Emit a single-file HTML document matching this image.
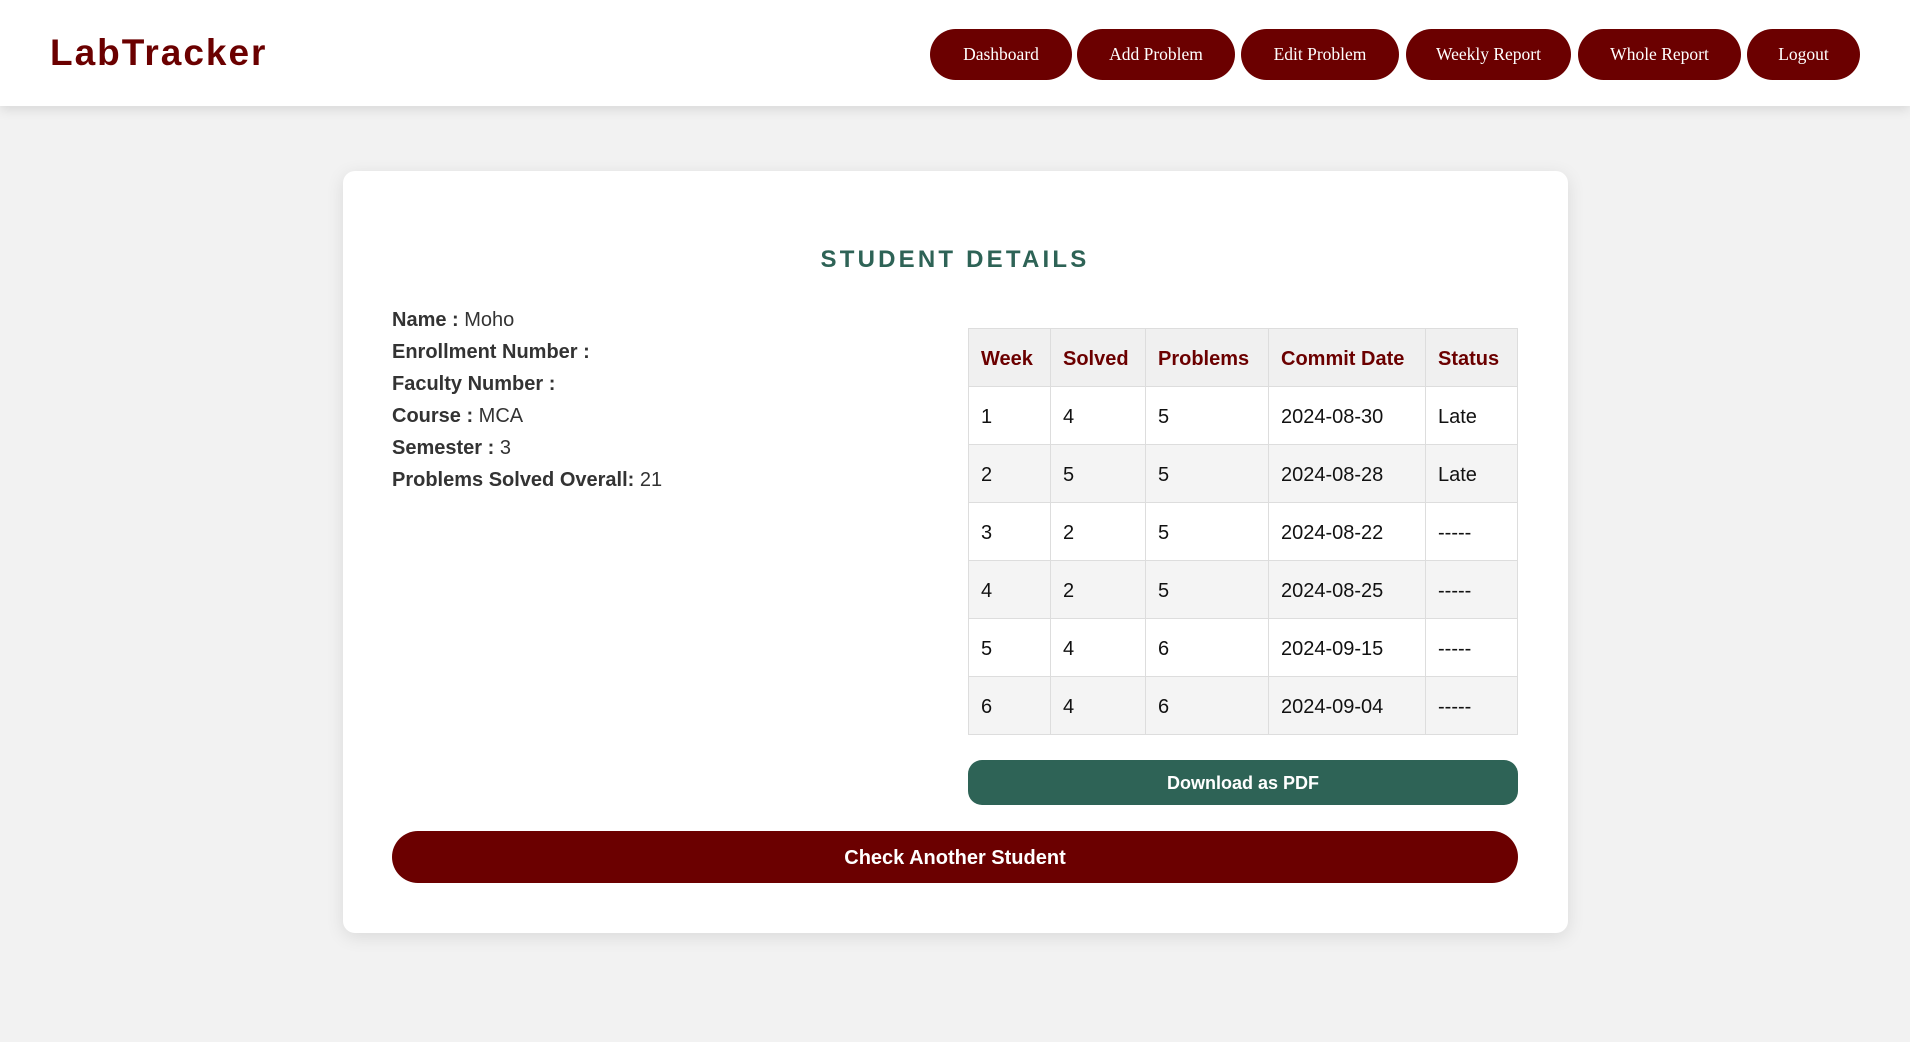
<!DOCTYPE html>
<html><head><meta charset="utf-8"><style>
*{box-sizing:border-box;margin:0;padding:0}
body{width:1910px;height:1042px;background:#f2f2f2;font-family:"Liberation Sans",Arial,sans-serif;position:relative;overflow:hidden}
.hdr{position:absolute;left:0;top:0;width:1910px;height:106px;background:#fff;box-shadow:0 3px 12px rgba(0,0,0,.12)}
.logo{position:absolute;left:50px;top:32px;font-size:37px;font-weight:bold;color:#6b0000;letter-spacing:2px}
.nb{position:absolute;top:29px;height:51px;border-radius:26px;background:#6b0000;color:#fff;font-family:"Liberation Serif",serif;font-size:17.5px;display:flex;align-items:center;justify-content:center}
.card{position:absolute;left:343px;top:171px;width:1225px;height:762px;background:#fff;border-radius:12px;box-shadow:0 4px 18px rgba(0,0,0,.1)}
.title{position:absolute;left:0;width:1910px;top:246px;text-align:center;font-size:24px;font-weight:bold;color:#2e6356;letter-spacing:3.2px}
.det{position:absolute;left:392px;font-size:20px;color:#333}
.det b{color:#333}
table{position:absolute;left:968px;top:328px;width:550px;border-collapse:collapse;font-size:20px}
td,th{border:1px solid #ddd;padding:3px 12px 0;text-align:left;height:58px;color:#111;font-weight:normal}
th{color:#6b0000;font-weight:bold;background:#f0f0f0}
tr:nth-child(odd) td{background:#f4f4f4}
.dl{position:absolute;left:968px;top:760px;width:550px;height:45px;border-radius:14px;background:#2e6356;color:#fff;font-weight:bold;font-size:18px;display:flex;align-items:center;justify-content:center;padding-top:2px}
.ck{position:absolute;left:392px;top:831px;width:1126px;height:52px;border-radius:26px;background:#6b0000;color:#fff;font-weight:bold;font-size:20px;display:flex;align-items:center;justify-content:center;padding-top:2px}
</style></head><body>
<div class="hdr"><div class="logo">LabTracker</div>
<div class="nb" style="left:930px;width:142px">Dashboard</div>
<div class="nb" style="left:1077px;width:158px">Add Problem</div>
<div class="nb" style="left:1241px;width:158px">Edit Problem</div>
<div class="nb" style="left:1406px;width:165px">Weekly Report</div>
<div class="nb" style="left:1578px;width:163px">Whole Report</div>
<div class="nb" style="left:1747px;width:113px">Logout</div>
</div>
<div class="card"></div>
<div class="title">STUDENT DETAILS</div>
<div class="det" style="top:309px"><b>Name :</b> Moho</div>
<div class="det" style="top:341px"><b>Enrollment Number :</b></div>
<div class="det" style="top:373px"><b>Faculty Number :</b></div>
<div class="det" style="top:405px"><b>Course :</b> MCA</div>
<div class="det" style="top:437px"><b>Semester :</b> 3</div>
<div class="det" style="top:469px"><b>Problems Solved Overall:</b> 21</div>
<table>
<tr><th style="width:82px">Week</th><th style="width:95px">Solved</th><th style="width:123px">Problems</th><th style="width:157px">Commit Date</th><th>Status</th></tr>
<tr><td>1</td><td>4</td><td>5</td><td>2024-08-30</td><td>Late</td></tr>
<tr><td>2</td><td>5</td><td>5</td><td>2024-08-28</td><td>Late</td></tr>
<tr><td>3</td><td>2</td><td>5</td><td>2024-08-22</td><td>-----</td></tr>
<tr><td>4</td><td>2</td><td>5</td><td>2024-08-25</td><td>-----</td></tr>
<tr><td>5</td><td>4</td><td>6</td><td>2024-09-15</td><td>-----</td></tr>
<tr><td>6</td><td>4</td><td>6</td><td>2024-09-04</td><td>-----</td></tr>
</table>
<div class="dl">Download as PDF</div>
<div class="ck">Check Another Student</div>
</body></html>
